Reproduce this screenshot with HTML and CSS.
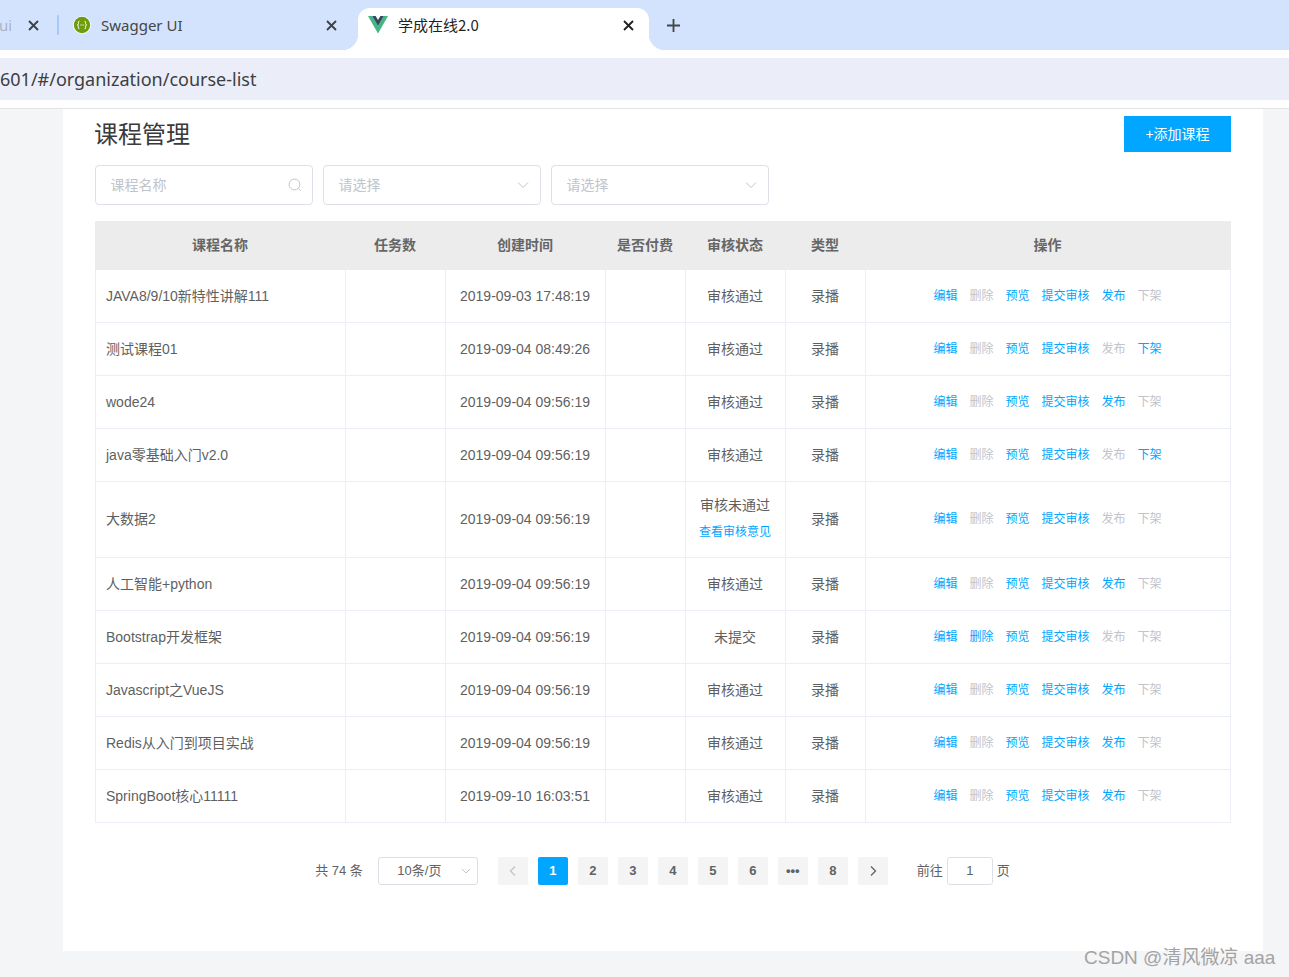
FILE: index.html
```html
<!DOCTYPE html>
<html lang="zh-CN">
<head>
<meta charset="utf-8">
<title>学成在线2.0</title>
<link rel="stylesheet" href="styles.css">
</head>
<body>
<header class="browser">
  <div class="tabstrip">
    <div class="tab tab-clipped"><span class="tab-cut">ui</span><svg class="close" viewBox="0 0 11 11"><path d="M1 1l9 9M10 1l-9 9"/></svg></div>
    <span class="tab-sep"></span>
    <div class="tab tab-swagger">
      <svg class="fav" viewBox="0 0 18 18"><circle cx="9" cy="9" r="9" fill="#fff"/><circle cx="9" cy="9" r="8.2" fill="#6f9c0c"/><path d="M6.4 5.2c-1.4 0-1 1.4-1 2.4 0 .8-.4 1.4-1 1.4.6 0 1 .6 1 1.4 0 1-.4 2.4 1 2.4M11.6 5.2c1.4 0 1 1.4 1 2.4 0 .8.4 1.4 1 1.4-.6 0-1 .6-1 1.4 0 1 .4 2.4-1 2.4" fill="none" stroke="#fff" stroke-width="1"/><path d="M7.4 9h.8M8.7 9h.8M10 9h.8" stroke="#fff" stroke-width="1"/></svg>
      <span class="tab-title">Swagger UI</span><svg class="close close-swagger" viewBox="0 0 11 11"><path d="M1 1l9 9M10 1l-9 9"/></svg>
    </div>
    <div class="tab tab-active">
      <svg class="fav-vue" viewBox="0 0 20 18"><path d="M0 0h4.2L10 10 15.8 0H20L10 17.5z" fill="#41b883"/><path d="M4.2 0h3.4L10 4l2.4-4h3.4L10 10z" fill="#35495e"/></svg>
      <span class="tab-title tab-title-cn">学成在线2.0</span><svg class="close close-dark" viewBox="0 0 11 11"><path d="M1 1l9 9M10 1l-9 9"/></svg>
    </div>
    <span class="newtab"><svg class="newtab-icon" viewBox="0 0 14 14"><path d="M7 0v14M0 7h14"/></svg></span>
  </div>
  <div class="toolbar"><div class="address">601/#/organization/course-list</div></div>
</header>

<main class="page">
  <section class="card">
    <div class="head-row">
      <h1 class="title">课程管理</h1>
      <a class="add-btn">+添加课程</a>
    </div>
    <div class="filters">
      <div class="field"><span class="placeholder">课程名称</span>
        <svg class="field-icon" viewBox="0 0 14 14"><circle cx="6.5" cy="6.5" r="5.4" fill="none" stroke="#c0c4cc" stroke-width="1"/><path d="M10.4 10.4l2.4 2.4" stroke="#c0c4cc" stroke-width="1"/></svg>
      </div>
      <div class="field"><span class="placeholder">请选择</span>
        <svg class="field-icon" viewBox="0 0 14 14"><path d="M2 4.5l5 5 5-5" fill="none" stroke="#c0c4cc" stroke-width="1"/></svg>
      </div>
      <div class="field"><span class="placeholder">请选择</span>
        <svg class="field-icon" viewBox="0 0 14 14"><path d="M2 4.5l5 5 5-5" fill="none" stroke="#c0c4cc" stroke-width="1"/></svg>
      </div>
    </div>

    <table class="grid">
      <colgroup>
        <col class="c-name"><col class="c-task"><col class="c-time"><col class="c-pay"><col class="c-state"><col class="c-type"><col class="c-ops">
      </colgroup>
      <thead>
        <tr><th>课程名称</th><th>任务数</th><th>创建时间</th><th>是否付费</th><th>审核状态</th><th>类型</th><th>操作</th></tr>
      </thead>
      <tbody>
        <tr><td class="left">JAVA8/9/10新特性讲解111</td><td></td><td>2019-09-03 17:48:19</td><td></td><td>审核通过</td><td>录播</td>
          <td><div class="ops"><a>编辑</a><a class="off">删除</a><a>预览</a><a>提交审核</a><a>发布</a><a class="off">下架</a></div></td></tr>
        <tr><td class="left">测试课程01</td><td></td><td>2019-09-04 08:49:26</td><td></td><td>审核通过</td><td>录播</td>
          <td><div class="ops"><a>编辑</a><a class="off">删除</a><a>预览</a><a>提交审核</a><a class="off">发布</a><a>下架</a></div></td></tr>
        <tr><td class="left">wode24</td><td></td><td>2019-09-04 09:56:19</td><td></td><td>审核通过</td><td>录播</td>
          <td><div class="ops"><a>编辑</a><a class="off">删除</a><a>预览</a><a>提交审核</a><a>发布</a><a class="off">下架</a></div></td></tr>
        <tr><td class="left">java零基础入门v2.0</td><td></td><td>2019-09-04 09:56:19</td><td></td><td>审核通过</td><td>录播</td>
          <td><div class="ops"><a>编辑</a><a class="off">删除</a><a>预览</a><a>提交审核</a><a class="off">发布</a><a>下架</a></div></td></tr>
        <tr class="tall"><td class="left">大数据2</td><td></td><td>2019-09-04 09:56:19</td><td></td><td><div class="state-line">审核未通过</div><a class="state-link">查看审核意见</a></td><td>录播</td>
          <td><div class="ops"><a>编辑</a><a class="off">删除</a><a>预览</a><a>提交审核</a><a class="off">发布</a><a class="off">下架</a></div></td></tr>
        <tr><td class="left">人工智能+python</td><td></td><td>2019-09-04 09:56:19</td><td></td><td>审核通过</td><td>录播</td>
          <td><div class="ops"><a>编辑</a><a class="off">删除</a><a>预览</a><a>提交审核</a><a>发布</a><a class="off">下架</a></div></td></tr>
        <tr><td class="left">Bootstrap开发框架</td><td></td><td>2019-09-04 09:56:19</td><td></td><td>未提交</td><td>录播</td>
          <td><div class="ops"><a>编辑</a><a>删除</a><a>预览</a><a>提交审核</a><a class="off">发布</a><a class="off">下架</a></div></td></tr>
        <tr><td class="left">Javascript之VueJS</td><td></td><td>2019-09-04 09:56:19</td><td></td><td>审核通过</td><td>录播</td>
          <td><div class="ops"><a>编辑</a><a class="off">删除</a><a>预览</a><a>提交审核</a><a>发布</a><a class="off">下架</a></div></td></tr>
        <tr><td class="left">Redis从入门到项目实战</td><td></td><td>2019-09-04 09:56:19</td><td></td><td>审核通过</td><td>录播</td>
          <td><div class="ops"><a>编辑</a><a class="off">删除</a><a>预览</a><a>提交审核</a><a>发布</a><a class="off">下架</a></div></td></tr>
        <tr><td class="left">SpringBoot核心11111</td><td></td><td>2019-09-10 16:03:51</td><td></td><td>审核通过</td><td>录播</td>
          <td><div class="ops"><a>编辑</a><a class="off">删除</a><a>预览</a><a>提交审核</a><a>发布</a><a class="off">下架</a></div></td></tr>
      </tbody>
    </table>

    <nav class="pager">
      <span class="total">共 74 条</span>
      <div class="size-select"><span>10条/页</span>
        <svg class="size-icon" viewBox="0 0 12 12"><path d="M2 4l4 4 4-4" fill="none" stroke="#c0c4cc" stroke-width="1"/></svg>
      </div>
      <div class="pages">
        <a class="pg pg-off"><svg class="pg-icon" viewBox="0 0 12 12"><path d="M8 1.5L3.5 6 8 10.5" fill="none" stroke="#c0c4cc" stroke-width="1.3"/></svg></a>
        <a class="pg pg-on">1</a><a class="pg">2</a><a class="pg">3</a><a class="pg">4</a><a class="pg">5</a><a class="pg">6</a><a class="pg">•••</a><a class="pg">8</a>
        <a class="pg"><svg class="pg-icon" viewBox="0 0 12 12"><path d="M4 1.5L8.5 6 4 10.5" fill="none" stroke="#606266" stroke-width="1.3"/></svg></a>
      </div>
      <div class="jump"><span>前往</span><span class="jump-box">1</span><span>页</span></div>
    </nav>
  </section>
</main>
<div class="watermark">CSDN @清风微凉 aaa</div>
</body>
</html>
```
FILE: styles.css
```css
* { box-sizing: border-box; }
html, body { margin: 0; padding: 0; }
body {
  position: relative;
  width: 1289px;
  height: 977px;
  overflow: hidden;
  background: #f3f5f7;
  font-family: "Liberation Sans", "Noto Sans CJK SC", sans-serif;
  color: #5f5f5f;
}
a { color: inherit; text-decoration: none; }

/* browser chrome */
.browser { background: #fff; height: 109px; border-bottom: 1px solid #e3e3e3; }
.tabstrip {
  height: 50px;
  background: #d3e3fd;
  display: flex;
  align-items: flex-end;
  font-family: "Noto Sans", "Noto Sans CJK SC", sans-serif;
}
.tab { height: 42px; display: flex; align-items: center; font-size: 15px; color: #444746; padding-bottom: 8px; }
.tab-clipped { width: 57px; overflow: hidden; flex: none; }
.tab-cut { width: 12px; color: #aab4c4; margin-left: -1px; margin-right: 16.5px; flex: none; overflow: hidden; }
.tab-sep { width: 2px; height: 20px; background: #a8c7fa; margin-bottom: 15px; border-radius: 1px; flex: none; }
.tab-swagger { width: 299px; padding-left: 14px; flex: none; }
.fav { width: 18px; height: 18px; flex: none; }
.tab-title { margin-left: 10px; flex: 1; white-space: nowrap; }
.close { width: 11px; height: 11px; flex: none; fill: none; stroke: #3c4043; stroke-width: 1.8; }
.close-swagger { margin-right: 21.5px; }
.tab-active {
  position: relative;
  width: 291px;
  background: #fff;
  border-radius: 12px 12px 0 0;
  padding: 0 0 8px 10px;
  color: #1f1f1f;
  flex: none;
}
.tab-active::before, .tab-active::after {
  content: "";
  position: absolute;
  bottom: 0;
  width: 16px;
  height: 16px;
}
.tab-active::before { left: -16px; background: radial-gradient(circle at 0 0, #d3e3fd 16px, #fff 16.5px); }
.tab-active::after { right: -16px; background: radial-gradient(circle at 100% 0, #d3e3fd 16px, #fff 16.5px); }
.fav-vue { width: 20px; height: 18px; flex: none; }
.tab-title-cn { font-size: 15px; line-height: 20px; font-family: "Noto Sans CJK SC", sans-serif; }
.close-dark { stroke: #1f1f1f; margin-right: 15.5px; }
.newtab { display: flex; margin: 0 0 18px 18px; }
.newtab-icon { width: 13px; height: 13px; fill: none; stroke: #444746; stroke-width: 2; }
.toolbar { padding-top: 8px; }
.address {
  height: 42px;
  background: #ebeef8;
  font-family: "Noto Sans", sans-serif;
  font-size: 18px;
  line-height: 42px;
  color: #3c4043;
  white-space: nowrap;
}

/* page */
.page { padding: 0 26px 0 63px; }
.card { width: 1200px; height: 842px; background: #fff; padding: 7px 32px 0; }
.head-row { display: flex; justify-content: space-between; align-items: center; height: 36px; }
.title { margin: 1px 0 0 -1px; font-size: 24px; font-weight: 400; color: #3a3a3a; line-height: 36px; }
.add-btn { width: 107px; height: 36px; background: #00a6ff; color: #fff; font-size: 14px; line-height: 36px; text-align: center; }
.filters { display: flex; gap: 10px; margin-top: 13px; }
.field {
  width: 218px;
  height: 40px;
  border: 1px solid #dcdfe6;
  border-radius: 4px;
  padding: 0 10px 0 14.5px;
  display: flex;
  align-items: center;
  justify-content: space-between;
  font-size: 14px;
  line-height: 20px;
  color: #c0c4cc;
}
.field-icon { width: 14px; height: 14px; flex: none; }

/* table */
.grid { margin-top: 16px; width: 1135px; table-layout: fixed; border-collapse: collapse; font-size: 14px; line-height: 20px; }
.c-name { width: 250px; } .c-task { width: 100px; } .c-time { width: 160px; } .c-pay { width: 80px; }
.c-state { width: 100px; } .c-type { width: 80px; } .c-ops { width: 365px; }
.grid th { height: 48px; background: #ececec; font-weight: 700; color: #666; text-align: center; padding: 0 1px 2px 0; border: 1px solid #ececec; }
.grid td { height: 53px; padding: 0 1px 0 0; border: 1px solid #ebeef5; text-align: center; color: #5f5f5f; white-space: nowrap; }
.grid .left { text-align: left; padding-left: 10px; }
.grid .tall td { height: 76px; padding-bottom: 1px; }
.state-line { margin-bottom: 7px; }
.state-link { display: block; color: #00a6ff; font-size: 12px; padding-bottom: 1px; }
.ops { display: flex; justify-content: center; gap: 12px; font-size: 12px; line-height: 18px; color: #00a6ff; }
.ops .off { color: #c0c4cc; }

/* pagination */
.pager { display: flex; justify-content: center; align-items: center; height: 28px; margin-top: 34px; font-size: 14px; line-height: 18px; color: #606266; }
.total { font-size: 13px; margin-right: 15px; margin-left: -1px; }
.size-select {
  width: 100px;
  height: 28px;
  border: 1px solid #dcdfe6;
  border-radius: 3px;
  font-size: 13px;
  padding: 0 5px 0 18.5px;
  display: flex;
  align-items: center;
  justify-content: space-between;
}
.size-icon { width: 12px; height: 12px; }
.pages { display: flex; gap: 10px; margin-left: 20px; }
.pg {
  width: 30px;
  height: 28px;
  background: #f4f4f5;
  border-radius: 2px;
  font-size: 13px;
  font-weight: 700;
  line-height: 26px;
  text-align: center;
  display: flex;
  align-items: center;
  justify-content: center;
}
.pg-on { background: #00a6ff; color: #fff; }
.pg-icon { width: 12px; height: 12px; }
.jump { display: flex; align-items: center; gap: 4px; margin-left: 29px; font-size: 13px; }
.jump-box {
  width: 46px;
  height: 28px;
  border: 1px solid #dcdfe6;
  border-radius: 3px;
  line-height: 26px;
  text-align: center;
}

.watermark { position: absolute; left: 1084px; top: 946px; font-size: 19px; line-height: 24px; color: #a3a3a3; white-space: nowrap; }
```
